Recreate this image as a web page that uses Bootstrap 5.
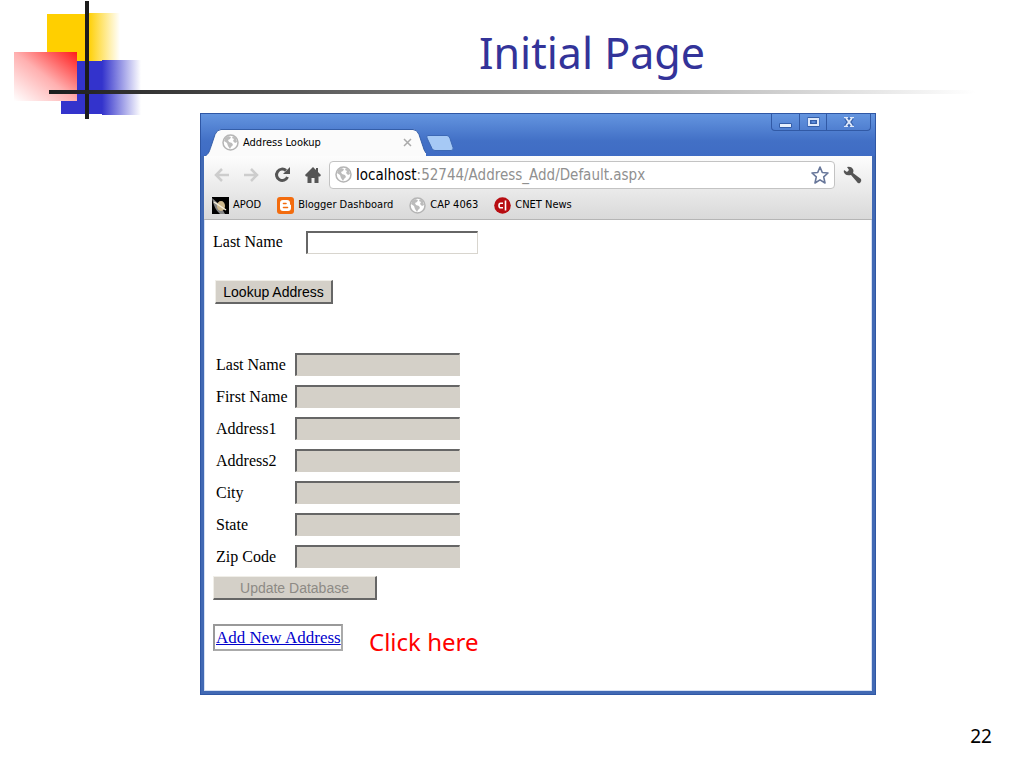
<!DOCTYPE html>
<html lang="en">
<head>
<meta charset="utf-8">
<meta name="viewport" content="width=device-width, initial-scale=1">
<title>Initial Page</title>
<link href="https://cdn.jsdelivr.net/npm/bootstrap@5.3.0/dist/css/bootstrap.min.css" rel="stylesheet">
<style>
body { background: #fff; color: #000; font-family: "Noto Sans", sans-serif; }
.slide-head { height: 113px; padding: 21px 0 0 160px; }
.slide-head h1 { font-size: 43px; line-height: 64px; color: #333399; font-weight: 400; }
.slide-mark { left: 0; top: 0; }
.slide-rule { left: 49px; right: 49px; top: 90px; height: 4px; background: linear-gradient(90deg, #1c1c1c, #fff); }
.slide-body { padding: 0 148px 0 200px; }
.browser { background: #4570c4; border: solid #4169b4; border-width: 0 4px 4px; outline: 1px solid #2f57a5; outline-offset: -1px; font-family: "DejaVu Sans Condensed", sans-serif; font-size: 11px; line-height: 16px; }
.title-strip { height: 43px; margin: 0 -4px; padding-left: 4px; background: linear-gradient(#6596e0, #4270c6 65%, #3f6cc4); }
.tab { height: 27px; width: 222px; padding: 0 14px 0 18px; }
.tab-shape { left: 0; top: 0; }
.plain { border: 0; background: none; padding: 0; line-height: 0; }
.new-tab { margin-bottom: 4px; }
.win-ctl { height: 18px; margin-right: 5px; border: 1px solid #3159a5; border-top: 0; border-radius: 0 0 4px 4px; }
.win-ctl button { width: 27px; }
.win-ctl button:last-child { width: 44px; }
.win-ctl button + button { border-left: 1px solid #3159a5; }
.tools { background: linear-gradient(#fdfdfd, #d9d9d9); border-bottom: 1px solid #b5b5b5; height: 64px; }
.tool-row { height: 37px; padding: 0 9px 0 10px; }
.nav-tools { gap: 15px; margin-right: 8px; }
.omnibox { height: 28px; background: #fff; border: 1px solid #c3c3c3; border-radius: 4px; padding: 0 5px; font-size: 15px; color: #909090; }
.omnibox b { font-weight: 400; color: #000; }
.bookmarks { height: 24px; padding-left: 8px; }
.bookmarks a { color: #000; text-decoration: none; }
.page { background: #fff; border: solid #d5e0f3; border-width: 0 1px 1px; padding: 10px 0 32px 8px; font-family: "Liberation Serif", serif; font-size: 16px; line-height: 24px; }
.field { border: 2px solid #d8d5ce; border-top-color: #666; border-left-color: #666; border-right-width: 1px; border-bottom-width: 1px; height: 23px; padding: 0 4px; border-radius: 0; background: #fff; }
.field:disabled { background: #d4d0c8; border-right-color: #d4d0c8; border-bottom-color: #d4d0c8; }
.search label { width: 93px; }
.search .field { width: 172px; }
.record label { width: 79px; padding-top: 2px; }
.record .field { width: 165px; }
.record { padding: 48px 0 0 3px; }
.record .line { height: 24px; }
.gray-btn { background: #d4d0c8; border: solid #f0eee8; border-width: 1px 2px 2px 1px; border-right-color: #666; border-bottom-color: #666; font: 14px/20px "Liberation Sans", sans-serif; height: 24px; padding: 0; }
.gray-btn:disabled { color: #8d8a85; }
.lookup { width: 118px; margin: 26px 0 0 2px; }
.update { width: 164px; margin-top: 8px; }
.foot { margin-top: 24px; }
.boxed { border: 2px solid #999; border-right-color: #aaa; border-bottom-color: #aaa; font-size: 17px; line-height: 23px; height: 27px; width: 130px; padding-left: 1px; color: #0000cc; }
.hint { color: #f00; font: 24px/32px "Noto Sans", sans-serif; margin: 2px 0 0 26px; }
.page-no { font-size: 19px; line-height: 26px; padding: 28px 32px 0 0; }
</style>
</head>
<body>
<header class="slide-head position-relative text-center">
  <svg class="slide-mark position-absolute" width="150" height="120" aria-hidden="true">
    <defs>
      <linearGradient id="gy"><stop offset="0" stop-color="#ffcf00"/><stop offset="1" stop-color="#fff"/></linearGradient>
      <linearGradient id="gb"><stop offset="0" stop-color="#3333cc"/><stop offset="1" stop-color="#fff"/></linearGradient>
      <linearGradient id="gr" x1="1" y1="0" x2="0" y2="1"><stop offset="0" stop-color="#ff1a1a"/><stop offset=".5" stop-color="#ffb0b0"/><stop offset="1" stop-color="#fff"/></linearGradient>
    </defs>
    <path fill="#ffcf00" d="M47 14h42v47H47z"/><path fill="url(#gy)" d="M88 13h32v48H88z"/>
    <path fill="#3333cc" d="M61 61h42v53H61z"/><path fill="url(#gb)" d="M102 60h39v55h-39z"/>
    <path fill="url(#gr)" d="M14 52h63v49H14z"/>
    <path fill="#1c1c1c" d="M85 1h4v118h-4z"/>
  </svg>
  <div class="slide-rule position-absolute"></div>
  <h1 class="mb-0">Initial Page</h1>
</header>

<svg width="0" height="0" class="position-absolute" aria-hidden="true">
  <symbol id="globe" viewBox="0 0 17 17"><circle cx="8.500" cy="8.500" r="7.500" fill="#fff" stroke="#b5b5b5" stroke-width="1.500"/><path fill="#bcbcbc" d="M3 4l3-2 3 1-1 2-2 1 1 2 3 1 1 2-2 2-1 2-2-3-1-3-3-2zM11 2l3 2 1 4-2 1-2-2 1-2-2-1z"/></symbol>
</svg>

<main class="slide-body">
  <div class="browser">
    <div class="title-strip d-flex align-items-end">
      <div class="tab position-relative d-flex align-items-center">
        <svg class="tab-shape position-absolute" width="222" height="27" aria-hidden="true"><path fill="#fbfbfb" stroke="#345ea9" d="M-1 27.500c5-1 6-4 8-10l4-12q2-5 6-5h192q4 0 6 5l4 12q2 8 8 10z"/></svg>
        <svg class="position-relative me-1" width="17" height="17" aria-hidden="true"><use href="#globe"/></svg>
        <span class="position-relative flex-grow-1">Address Lookup</span>
        <button class="plain position-relative" aria-label="Close tab"><svg width="9" height="9" stroke="#aaa" stroke-width="1.500"><path d="M1 1l7 7M8 1l-7 7"/></svg></button>
      </div>
      <button class="plain new-tab" aria-label="New tab"><svg width="28" height="17"><path fill="#a6c9f5" stroke="#3c68b5" d="M2 .500h19q2 0 3 3l3 9q1 3-2 3H9q-2 0-3-2L1 3q-1-2.500 1-2.500z"/></svg></button>
      <div class="win-ctl d-flex ms-auto align-self-start">
        <button class="plain" aria-label="Minimize"><svg width="13" height="12"><path fill="#e6effc" stroke="#345ea9" d="M.500 7.500h12v4H.500z"/></svg></button>
        <button class="plain" aria-label="Maximize"><svg width="13" height="12"><path fill="none" stroke="#345ea9" stroke-width="4" d="M2.500 3h8v6h-8z"/><path fill="none" stroke="#dde8fa" stroke-width="2" d="M2 3h9v6H2z"/></svg></button>
        <button class="plain" aria-label="Close"><svg width="14" height="12"><path fill="none" stroke="#345ea9" stroke-width="4" d="M4 2l6 8M10 2l-6 8"/><path fill="none" stroke="#dde8fa" stroke-width="2" d="M4 2l6 8M10 2l-6 8"/><path stroke="#dde8fa" d="M2 1.500h4M8 1.500h4M2 10.500h4M8 10.500h4"/></svg></button>
      </div>
    </div>

    <div class="tools">
      <div class="tool-row d-flex align-items-center">
        <div class="nav-tools d-flex align-items-center">
          <button class="plain" aria-label="Back"><svg width="15" height="14" fill="none" stroke="#cdcdcd" stroke-width="2.500"><path d="M15 7H2M8 1L2 7l6 6"/></svg></button>
          <button class="plain" aria-label="Forward"><svg width="15" height="14" fill="none" stroke="#cdcdcd" stroke-width="2.500"><path d="M0 7h13M7 1l6 6-6 6"/></svg></button>
          <button class="plain" aria-label="Reload"><svg width="16" height="16"><path fill="none" stroke="#555" stroke-width="3" d="M12 3.500A5.700 5.700 0 1 0 13.500 10"/><path fill="#555" d="M16 0v7H9z"/></svg></button>
          <button class="plain" aria-label="Home"><svg width="16" height="16" fill="#555"><path d="M8 0L0 8l1 1.500h1.500V16h4v-5h3v5h4V9.500H15L16 8l-3-3V1h-2v2z"/></svg></button>
        </div>
        <div class="omnibox d-flex align-items-center flex-grow-1">
          <svg class="me-1" width="17" height="17" aria-hidden="true"><use href="#globe"/></svg>
          <span class="flex-grow-1"><b>localhost</b>:52744/Address_Add/Default.aspx</span>
          <button class="plain" aria-label="Bookmark this page"><svg width="18" height="18"><path fill="#fff" stroke="#68779a" stroke-width="1.600" stroke-linejoin="round" d="M9 1l2.300 5.500 5.700.500-4.300 3.800L14 17l-5-3.200L4 17l1.300-6.200L1 7l5.700-.500z"/></svg></button>
        </div>
        <button class="plain ms-2" aria-label="Settings"><svg width="20" height="18"><path fill="#555" d="M4 1q4-1 6 2 1 2 0 4l8 6q1 2-1 4-2 1-3-1L8 9Q4 10 2 8 0 6 1 4l3 2 2-2z"/></svg></button>
      </div>
      <nav class="bookmarks d-flex align-items-center gap-3" aria-label="Bookmarks">
        <a href="#" class="d-flex align-items-center"><svg class="me-1" width="17" height="17"><path d="M0 0h17v17H0z"/><path fill="#ddd" d="M0 1l8 7 5 9H8Q2 12 0 1z" opacity=".6"/><ellipse cx="9" cy="9" rx="4" ry="5" fill="#cdb88c"/><path stroke="#f6efdc" stroke-width="1.500" d="M2 5l12 8"/></svg>APOD</a>
        <a href="#" class="d-flex align-items-center"><svg class="me-1" width="17" height="17"><rect width="17" height="17" rx="3" fill="#f36c0e"/><path fill="#fff" d="M6 3h4q3 0 3 3v1q0 1 1 1v3q0 3-3 3H6q-3 0-3-3V6q0-3 3-3z"/><path stroke="#f36c0e" stroke-width="1.600" stroke-linecap="round" d="M6.500 6.500h2.500M6.500 10.500h4"/></svg>Blogger Dashboard</a>
        <a href="#" class="d-flex align-items-center"><svg class="me-1" width="17" height="17"><use href="#globe"/></svg>CAP 4063</a>
        <a href="#" class="d-flex align-items-center"><svg class="me-1" width="17" height="17"><circle cx="8.500" cy="8.500" r="8.300" fill="#b80d12"/><path fill="none" stroke="#fff" stroke-width="1.600" d="M9 6.200H6.500q-1.500 0-1.500 2.300t1.500 2.300H9M11.500 3.500v10"/></svg>CNET News</a>
      </nav>
    </div>

    <div class="page">
      <form>
        <div class="search d-flex align-items-center">
          <label for="q">Last Name</label><input class="field" id="q" type="text">
        </div>
        <button type="button" class="gray-btn lookup d-block">Lookup Address</button>
      </form>
      <form>
        <div class="record d-flex flex-column gap-2">
          <div class="line d-flex align-items-center"><label for="f1">Last Name</label><input class="field" id="f1" type="text" disabled></div>
          <div class="line d-flex align-items-center"><label for="f2">First Name</label><input class="field" id="f2" type="text" disabled></div>
          <div class="line d-flex align-items-center"><label for="f3">Address1</label><input class="field" id="f3" type="text" disabled></div>
          <div class="line d-flex align-items-center"><label for="f4">Address2</label><input class="field" id="f4" type="text" disabled></div>
          <div class="line d-flex align-items-center"><label for="f5">City</label><input class="field" id="f5" type="text" disabled></div>
          <div class="line d-flex align-items-center"><label for="f6">State</label><input class="field" id="f6" type="text" disabled></div>
          <div class="line d-flex align-items-center"><label for="f7">Zip Code</label><input class="field" id="f7" type="text" disabled></div>
        </div>
        <button type="button" class="gray-btn update d-block" disabled>Update Database</button>
      </form>
      <div class="foot d-flex align-items-start">
        <a href="#" class="boxed text-nowrap">Add New Address</a>
        <span class="hint">Click here</span>
      </div>
    </div>
  </div>
</main>
<footer class="page-no text-end">22</footer>
<script src="https://cdn.jsdelivr.net/npm/bootstrap@5.3.0/dist/js/bootstrap.bundle.min.js"></script>
</body>
</html>
